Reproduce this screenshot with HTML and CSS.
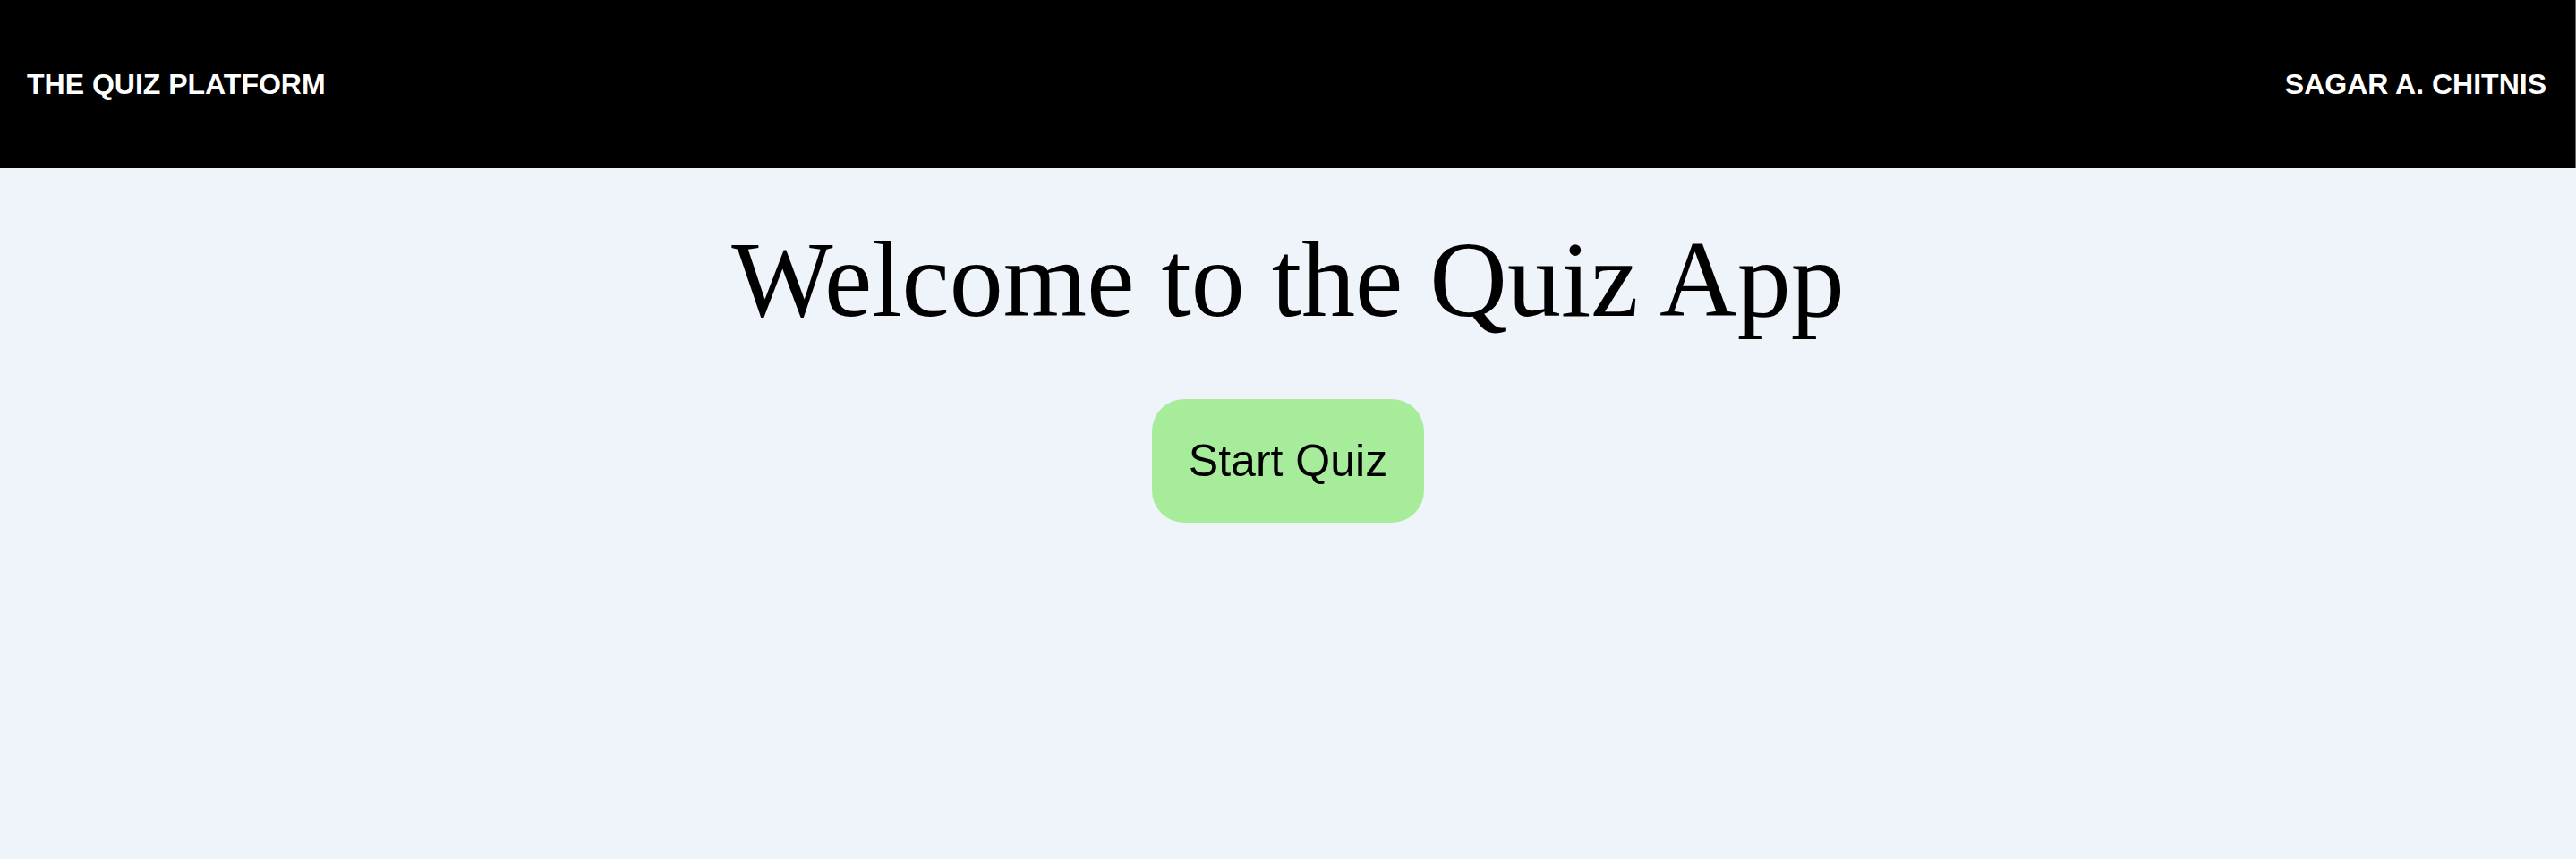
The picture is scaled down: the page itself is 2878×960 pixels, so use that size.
FILE: index.html
```html
<!DOCTYPE html>
<html lang="en">
<head>
<meta charset="utf-8">
<title>The Quiz Platform</title>
<link rel="stylesheet" href="styles.css">
</head>
<body>
<header class="topbar">
  <div class="brand">THE QUIZ PLATFORM</div>
  <div class="author">SAGAR A. CHITNIS</div>
</header>
<main class="home">
  <h1 class="title">Welcome to the Quiz App</h1>
  <button class="start-btn" type="button">Start Quiz</button>
</main>
</body>
</html>
```

FILE: styles.css
```css
html, body {
  margin: 0;
  padding: 0;
}
body {
  background: #eff4fa;
  min-height: 960px;
  font-family: "Liberation Serif", "Times New Roman", serif;
}
.topbar {
  height: 188px;
  background: #000;
  color: #fff;
  display: flex;
  align-items: center;
  justify-content: space-between;
  padding: 0 32px 0 30px;
  font-family: "Liberation Sans", Arial, sans-serif;
  font-weight: bold;
  font-size: 32px;
  box-sizing: border-box;
  border-right: 1px solid #6a6a6a;
}
.home {
  display: flex;
  flex-direction: column;
  align-items: center;
}
.title {
  margin: 56px 0 0;
  font-family: "Liberation Serif", "Times New Roman", serif;
  font-weight: normal;
  font-size: 120px;
  color: #000;
}
.start-btn {
  margin-top: 64px;
  background: #a6ec9b;
  border: none;
  border-radius: 36px;
  padding: 40px 41px;
  font-family: "Liberation Sans", Arial, sans-serif;
  font-size: 50px;
  color: #000;
  cursor: pointer;
}
```
